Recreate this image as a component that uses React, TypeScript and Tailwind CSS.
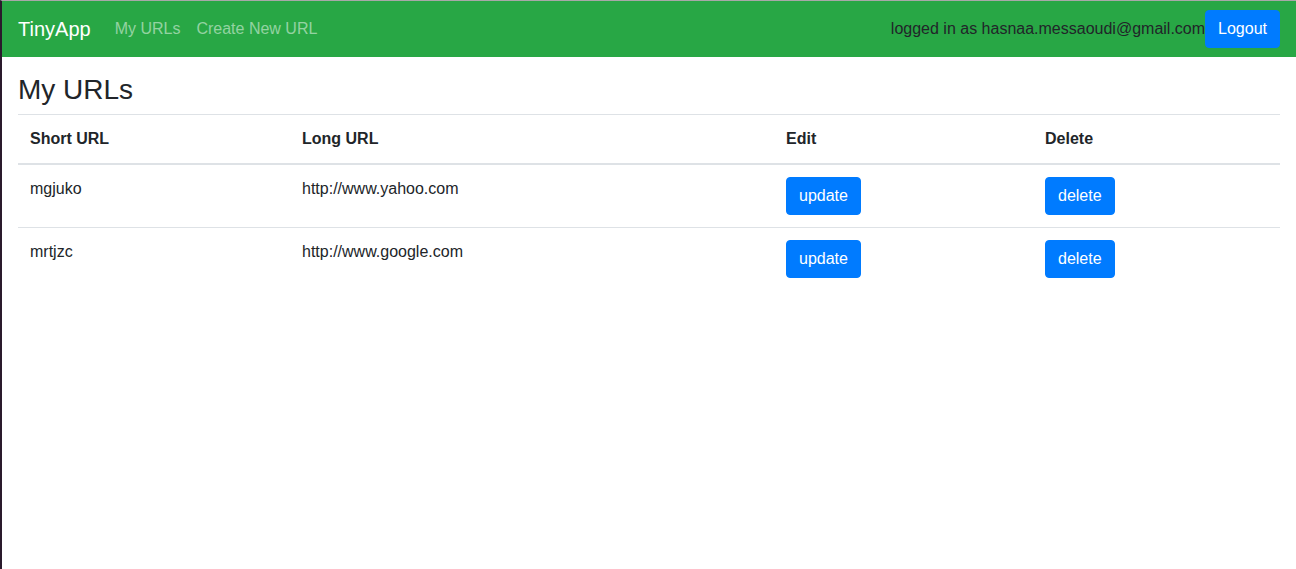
const URLS = [
  { short: "mgjuko", long: "http://www.yahoo.com" },
  { short: "mrtjzc", long: "http://www.google.com" },
];

const btn =
  "h-[38px] rounded-[4px] border border-[#007bff] bg-[#007bff] px-3 text-base leading-6 text-white";

export default function App() {
  return (
    <div className="flex min-h-[569px] flex-col border-l-2 border-t border-l-[#2a1a2c] border-t-[#a8a8a8] bg-white font-['Liberation_Sans',Arial,sans-serif] text-[#212529]">
      <nav className="flex h-14 items-center bg-[#28a745] px-4">
        <a className="mr-4 text-xl leading-[30px] text-white">TinyApp</a>
        <div className="flex">
          <a className="px-2 text-base text-white/50">My URLs</a>
          <a className="px-2 text-base text-white/50">Create New URL</a>
        </div>
        <div className="ml-auto flex items-center">
          <span className="text-base">logged in as hasnaa.messaoudi@gmail.com</span>
          <button className={btn}>Logout</button>
        </div>
      </nav>

      <main className="px-4">
        <h3 className="mb-[7px] mt-4 text-[28px] leading-[1.2] font-medium">My URLs</h3>
        <table className="w-full table-fixed border-collapse text-base leading-6">
          <colgroup>
            <col className="w-[272px]" />
            <col className="w-[484px]" />
            <col className="w-[259px]" />
            <col />
          </colgroup>
          <thead>
            <tr className="border-t border-b-2 border-[#dee2e6] text-left">
              <th className="p-3 font-bold">Short URL</th>
              <th className="p-3 font-bold">Long URL</th>
              <th className="p-3 font-bold">Edit</th>
              <th className="p-3 font-bold">Delete</th>
            </tr>
          </thead>
          <tbody>
            {URLS.map((u, i) => (
              <tr key={u.short} className={i > 0 ? "border-t border-[#dee2e6]" : ""}>
                <td className="p-3 align-top">{u.short}</td>
                <td className="p-3 align-top">{u.long}</td>
                <td className="p-3 align-top">
                  <button className={btn}>update</button>
                </td>
                <td className="p-3 align-top">
                  <button className={btn}>delete</button>
                </td>
              </tr>
            ))}
          </tbody>
        </table>
      </main>
    </div>
  );
}
